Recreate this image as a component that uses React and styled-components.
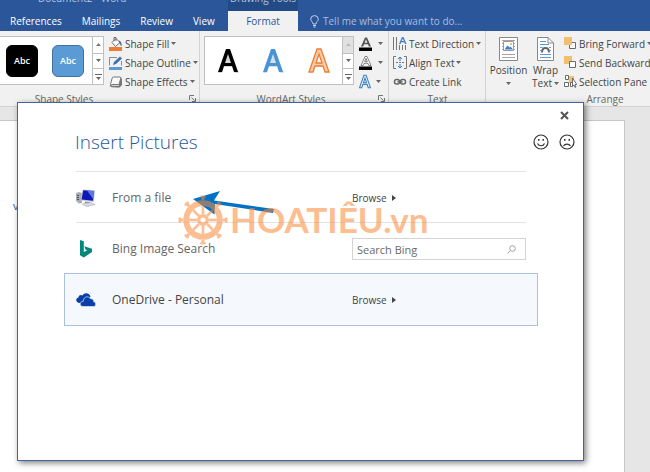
import React from 'react';
import styled, {createGlobalStyle, css} from 'styled-components';

const colors = {
    wordBlue: '#2b579a',
    darkBlue: '#224a86',
    ribbon: '#f1f1f1',
    canvas: '#e6e6e6',
    line: '#d2d2d2',
    text: '#444444',
    accent: '#5b9bd5',
    icon: '#6a6a6a',
    tan: '#f0bf70'
};

const GlobalStyle = createGlobalStyle`
    * {
        box-sizing: border-box;
    }

    body {
        margin: 0;
        background: ${colors.canvas};
        color: ${colors.text};
        font-family: "Open Sans", "Noto Sans", sans-serif;
        font-size: 10px;
    }

    button, input {
        font: inherit;
        color: inherit;
    }

    button {
        padding: 0;
        border: 0;
        background: none;
        white-space: nowrap;
    }

    svg {
        display: block;
        flex: none;
    }
`;

const Window = styled.div`
    position: relative;
    display: flex;
    flex-direction: column;
    min-height: 100vh;
    overflow: hidden;
`;

const Header = styled.header`
    display: grid;
    grid-template-columns: 228px 70px 1fr;
    grid-template-rows: 11px 20px;
    background: ${colors.wordBlue};
    color: #ffffff;
`;

const TitleText = styled.div`
    display: flex;
    align-items: flex-end;
    justify-content: ${({$center}) => $center ? 'center' : 'flex-start'};
    height: 11px;
    padding-left: ${({$center}) => $center ? 0 : 38}px;
    overflow: hidden;
    background: ${({$center}) => $center ? colors.darkBlue : 'none'};
    color: #b4c6e2;
    line-height: 16px;
    white-space: nowrap;

    span {
        margin-bottom: 5px;
    }
`;

const Tabs = styled.nav`
    grid-row: 2;
    grid-column: 1;
    display: flex;
    align-items: center;
    gap: 20px;
    padding-left: 10px;
`;

const Tab = styled.button`
    height: 20px;
    line-height: 20px;

    ${({$active}) => $active && css`
        grid-row: 2;
        grid-column: 2;
        background: ${colors.ribbon};
        color: ${colors.wordBlue};
    `}
`;

const TellMe = styled.button`
    grid-row: 2;
    grid-column: 3;
    display: flex;
    align-items: center;
    justify-self: start;
    gap: 4px;
    padding-left: 12px;
    color: #a9bddd;
`;

const Ribbon = styled.div`
    display: flex;
    height: 76px;
    border-bottom: 1px solid ${colors.line};
    background: ${colors.ribbon};
`;

const Group = styled.section`
    flex: none;
    display: flex;
    flex-direction: column;
    justify-content: space-between;
    width: ${({$width}) => $width}px;
    margin-left: ${({$pull}) => $pull ? -$pull : 0}px;
    padding: 3px 0 0 4px;
    border-right: 1px solid ${colors.line};
`;

const GroupBody = styled.div`
    display: flex;
    align-items: flex-start;
    gap: ${({$gap}) => $gap}px;
`;

const GroupFooter = styled.footer`
    display: grid;
    grid-template-columns: 1fr auto;
    align-items: center;
    height: 16px;
    padding-right: 3px;
    color: #666666;
    text-align: center;
`;

const Gallery = styled.div`
    flex: none;
    display: flex;
    justify-content: flex-end;
    width: ${({$width}) => $width}px;
    height: 49px;
    margin-top: 2px;
    border: 1px solid #c0c0c0;
    background: #ffffff;
`;

const Swatches = styled.div`
    flex: 1;
    display: flex;
    align-items: center;
    justify-content: ${({$end}) => $end ? 'flex-end' : 'space-around'};
    gap: ${({$end}) => $end ? 14 : 0}px;
    padding: ${({$end}) => $end ? '0 8px' : 0};
`;

const ShapeSwatch = styled.button`
    width: 32px;
    height: 32px;
    border: 1px solid ${({$edge}) => $edge};
    border-radius: 6px;
    background: ${({$fill}) => $fill};
    color: #ffffff;
    font-size: 9px;
    font-weight: 600;
`;

const Scroller = styled.div`
    display: grid;
    grid-template-rows: 1fr 1fr 1fr;
    width: 11px;
    border-left: 1px solid #c0c0c0;
`;

const ScrollButton = styled.button`
    display: grid;
    place-items: center;
    background: ${({$off}) => $off ? '#e1e1e1' : 'none'};

    & + & {
        border-top: 1px solid #c0c0c0;
    }
`;

const Commands = styled.div`
    display: grid;
    grid-auto-rows: 19px;
    justify-items: start;
`;

const Command = styled.button`
    display: flex;
    align-items: center;
    gap: ${({$gap = 2}) => $gap}px;
    height: 19px;
`;

const LargeCommand = styled.button`
    display: flex;
    flex-direction: column;
    align-items: center;
    width: 37px;
    padding-top: 3px;
    line-height: 13px;

    span {
        display: flex;
        align-items: center;
        gap: 2px;
        min-height: 13px;
    }

    svg + span {
        margin-top: 3px;
    }
`;

const Canvas = styled.main`
    flex: 1;
    display: flex;
    padding: 13px 25px 0 0;
`;

const Paper = styled.article`
    flex: 1;
    padding: 77px 13px;
    border: 1px solid #c6c6c6;
    border-width: 1px 1px 0 0;
    background: #ffffff;
    color: #2f5597;
    font-size: 11px;

    p {
        margin: 0;
        line-height: 16px;
    }
`;

const Dialog = styled.section`
    position: absolute;
    top: 102px;
    left: 17px;
    right: 66px;
    height: 359px;
    border: 1px solid #41659f;
    background: #ffffff;
    box-shadow: 2px 2px 6px rgba(0, 0, 0, .5);
`;

const DialogBar = styled.div`
    display: flex;
    align-items: flex-start;
    justify-content: flex-end;
    height: 24px;
    padding: 8px 14px 0 0;
`;

const DialogHeader = styled.header`
    display: flex;
    align-items: center;
    justify-content: space-between;
    height: 30px;
    padding: 0 8px 0 57px;

    h1 {
        margin: 0;
        color: ${colors.wordBlue};
        font-size: 19px;
        font-weight: 300;
        line-height: 30px;
    }

    div {
        display: flex;
        gap: 10px;
    }
`;

const Sources = styled.div`
    margin: 14px 45px 0 46px;
`;

const Source = styled.div`
    display: grid;
    grid-template-columns: 36px 1fr 174px;
    align-items: center;
    height: 51px;
    margin: 0 12px;
    padding-top: 2px;
    border-top: 1px solid #e3e3e3;
    color: #666666;

    ${({$selected}) => $selected && css`
        height: 53px;
        margin: 0;
        padding: 0 11px;
        border: 1px solid #a9c0de;
        background: #f5f9fe;
        color: ${colors.text};
    `}
`;

const SourceName = styled.label`
    font-size: 12px;
    line-height: 16px;
`;

const Browse = styled.button`
    display: flex;
    align-items: center;
    justify-self: start;
    gap: 5px;
    color: #444444;
    font-weight: 500;
`;

const SearchBox = styled.div`
    display: flex;
    align-items: center;
    height: 22px;
    padding: 0 9px 0 4px;
    border: 1px solid #d4d4d4;
    background: #ffffff;

    input {
        flex: 1;
        min-width: 0;
        padding: 0;
        border: 0;
        outline: 0;
        background: none;
        font-size: 11px;
    }

    input::placeholder {
        color: #6a6a6a;
        opacity: 1;
    }
`;

const Arrow = styled.svg`
    position: absolute;
    top: 87px;
    left: 174px;
`;

const Watermark = styled.div`
    position: absolute;
    top: 92px;
    left: 160px;
    display: flex;
    align-items: flex-start;
    gap: 2px;
    color: rgb(251, 137, 55);
    opacity: .55;
    pointer-events: none;
    font-family: Lato, sans-serif;
    font-size: 35px;
    font-weight: 700;
    line-height: 48px;
`;

const Caret = ({up, fill = '#666666'}) => (
    <svg width="5" height="3" viewBox="0 0 5 3">
        <path d={up ? 'M0 3 2.5 0 5 3z' : 'M0 0h5L2.5 3z'} fill={fill}/>
    </svg>
);

const Launcher = () => (
    <button aria-label="More options">
        <svg width="7" height="7" fill="none" stroke="#777777">
            <path d="M.5 5V.5H5M2.5 2.5l3 3M6.5 3v3.5H3"/>
        </svg>
    </button>
);

const GalleryScroller = ({topDisabled}) => (
    <Scroller>
        <ScrollButton aria-label="Previous row" $off={topDisabled}>
            <Caret up fill={topDisabled ? '#bbbbbb' : '#777777'}/>
        </ScrollButton>
        <ScrollButton aria-label="Next row"><Caret/></ScrollButton>
        <ScrollButton aria-label="More styles">
            <svg width="7" height="6"><path d="M0 0h7v1H0zM1 3h5L3.5 6z" fill="#666666"/></svg>
        </ScrollButton>
    </Scroller>
);

const FillIcon = () => (
    <svg width="14" height="14">
        <path d="M3 5.5 7 1.5 11 5.5 6.5 9.5z" fill="#ffffff" stroke={colors.icon}/>
        <path d="M5 4V.5h2V4" fill="none" stroke={colors.icon}/>
        <path d="M10 3.5c2 .5 3 2.5 2.5 6-1-1-1.5-2.5-2.5-4z" fill="#3f6fae"/>
        <path d="M0 10h13v4H0z" fill="#ed7d31"/>
    </svg>
);

const OutlineIcon = () => (
    <svg width="14" height="14">
        <path d="M8 1.5H.5v8M12.5 5v4.5" fill="none" stroke="#8a8a8a"/>
        <path d="m4 9 1-3 6-5.5 2 2L7 8z" fill="#3f6fae"/>
        <path d="M0 11h13v3H0z" fill={colors.accent}/>
    </svg>
);

const EffectsIcon = () => (
    <svg width="14" height="14">
        <path d="M3 12.5h7.5L13 10V3.5L9.5 12z" fill="#777777"/>
        <path d="M4.500 2h6.500q1 0 .8 1l-1.500 5.500q-.3 1-1.300 1H2.500q-1 0-.8-1L3.200 3q.3-1 1.300-1z" fill="#fafafa" stroke="#777777"/>
        <path d="M1.500 9.500q0 2 1.500 2h6q1 0 1.500-1L12.500 3.500" fill="none" stroke="#777777" strokeWidth="1.5"/>
    </svg>
);

// one drawing for gallery samples and the small text fill / outline / effects icons
const LetterA = ({size = 22, fill, stroke = 'none', shadow, bar}) => (
    <svg width={size} height={bar ? 14 : size + 3} viewBox={bar ? '0 0 14 14' : '0 0 22 25'}>
        {shadow && <path d="M1 25 9 3h4.5L22 25h-4l-2-6H7l-2 6z" fill={shadow} opacity=".35"/>}
        {bar
            ? <g>
                <path d="M2 9.5 6 .5h2l4 9H9.800L9 7.300H5L4.200 9.500zM5.700 5.700h2.600L7 2.300z" fill={fill} stroke={stroke} strokeWidth=".7"/>
                <path d="M0 10.500h13V14H0z" fill="#000000"/>
            </g>
            : <path
                d="M1 24 9 1h4l8 23h-4l-2-6H7l-2 6zM8 15h6l-3-9z"
                fill={fill}
                stroke={stroke}
                strokeWidth={size < 20 ? 2 : 1.3}
                fillRule="evenodd"
            />}
    </svg>
);

const DirectionIcon = () => (
    <svg width="14" height="13">
        <path d="M.5 0v13M3.5 0v13M6.5 8v5M9.5 8v5M12.5 8v5" stroke="#777777"/>
        <path d="M6 7 9 0h1.500L13.500 7H12l-.7-1.800H8.200L7.500 7zM8.700 4h2.200L9.800 1.500z" fill="#3b7fc4"/>
    </svg>
);

const AlignIcon = () => (
    <svg width="14" height="13" fill="none" stroke="#777777">
        <path d="M3 .5H.5v12H3M11 .5h2.500v12H11"/>
        <path d="M3 6.500h8" strokeDasharray="2 1"/>
        <path d="M7 1v4M5 3l2-2 2 2M7 12V8M5 10l2 2 2-2" stroke="#3b7fc4"/>
    </svg>
);

const LinkIcon = () => (
    <svg width="14" height="8" fill="none" stroke="#666666" strokeWidth="1.5">
        <rect x="1.5" y="1.5" width="5" height="4.5" rx="2"/>
        <rect x="7.5" y="1.5" width="5" height="4.5" rx="2"/>
        <path d="M4.500 3.800h5"/>
    </svg>
);

const PositionIcon = () => (
    <svg width="19" height="24">
        <path d="M.5.5h18v23H.5z" fill="#ffffff" stroke="#888888"/>
        <path d="M3 3.500h13M3 17.500h13M3 20.500h13M3 6.500h2M3 9.500h2M3 12.500h2M14 6.500h2M14 9.500h2M14 12.500h2" stroke="#a5a5a5"/>
        <path d="M4.500 4.500h10v9h-10z" fill="#ffffff" stroke="#999999"/>
        <path d="m5.500 12.500 3-4 2 2 1-1 2.500 3z" fill="#3b7fc4"/>
        <path d="M11 6h2v2h-2z" fill={colors.tan}/>
    </svg>
);

const WrapIcon = () => (
    <svg width="17" height="24">
        <path d="M.5.5H11L16.500 6v17.500H.5z" fill="#ffffff" stroke="#888888"/>
        <path d="M11 .5V6h5.500" fill="none" stroke="#888888"/>
        <path d="M3 4.500h6M3 7.500h9M3 10.500h2.500M12 10.500h2M3 13.500h1M13 13.500h1M3 17.500h11M3 20.500h11" stroke={colors.accent}/>
        <path d="M5 15.500c0-6 7-6 7 0" fill="none" stroke="#666666" strokeWidth="2"/>
    </svg>
);

const ForwardIcon = () => (
    <svg width="13" height="13">
        <path d="M5.500 5.500h6v6h-6z" fill="#ffffff" stroke={colors.icon}/>
        <path d="M0 0h8v8H0z" fill={colors.tan}/>
    </svg>
);

const BackwardIcon = () => (
    <svg width="13" height="13">
        <path d="M0 0h8v8H0z" fill={colors.tan}/>
        <path d="M5.500 5.500h6v6h-6z" fill="#ffffff" stroke={colors.icon}/>
    </svg>
);

const SelectionIcon = () => (
    <svg width="13" height="13">
        <path d="M5 1h5v7H5z" fill={colors.tan}/>
        <path d="M1.500.5h3v4h-3zM.5 7.500h4v4h-4zM6.500 7.500h2v4h-2z" fill="#ffffff" stroke={colors.icon}/>
        <path d="M8.500 3v8l1.500-1 1 2.500 1-.5-1-2.500h1.800z" fill="#ffffff" stroke="#555555" strokeWidth=".8"/>
    </svg>
);

const BulbIcon = () => (
    <svg width="9" height="13" fill="none" stroke="#c3d1e8">
        <path d="M3 9C3 7 .7 6.300.7 4.200a3.800 3.600 0 0 1 7.600 0C8.300 6.300 6 7 6 9zM3 10.500h3M3.500 12h2"/>
    </svg>
);

const Face = ({sad}) => (
    <button aria-label={sad ? 'Send a frown' : 'Send a smile'}>
        <svg width="16" height="16" fill="none" stroke="#333333" strokeWidth="1.2">
            <circle cx="8" cy="8" r="7"/>
            <path d={sad ? 'M4.500 12c1.500-2.500 5.500-2.500 7 0' : 'M4.500 9.500c1.500 3 5.500 3 7 0'}/>
            <path d="M5 5h1.500v1.800H5zM9.500 5H11v1.800H9.500z" fill="#333333" stroke="none"/>
        </svg>
    </button>
);

const ComputerIcon = () => (
    <svg width="20" height="18">
        <path d="M0 4 3 3l3 1v10l-3 .5L0 12z" fill="#a9adb2"/>
        <path d="M1 6.500h2M1 8.500h2M1 10.500h2" stroke="#4c5055"/>
        <path d="M6.500.5 19 1.200 18 13 4.500 11.500z" fill="#c6cede"/>
        <path d="M7.300 1.300 17.800 2 17 11.800 5.500 10.500z" fill="#1018b4"/>
        <path d="m11 1.600 6.800.4-.7 8z" fill="#5b78e4"/>
        <path d="m9 12.500 5 .5.500 2-6-.7z" fill="#8f959d"/>
        <path d="m6 15 9-1.500 4 2-8 2.200z" fill="#d6d9dd" stroke="#b1b5ba" strokeWidth=".6"/>
    </svg>
);

const BingIcon = () => (
    <svg width="20" height="18">
        <path d="M4 0 7.800 1.300V12L11.300 10.300 9.500 9.400 8.300 6.200 16 8.800V12L7.800 17.500 4 15.300z" fill="#00897b"/>
    </svg>
);

const OneDriveIcon = () => (
    <svg width="20" height="14">
        <path d="M4 10C-.8 10-.8 5 2.600 4.400 2.500 2.300 5 1.300 6.500 2.500 8-.5 13-.7 14.500 3.600L10 8z" fill="#0b3fa8"/>
        <path d="M7 13.500c-3.800 0-3.800-5 .3-5.300 0-4.900 5.700-5.600 7.200-2.400 2.600-.3 3.400 1.500 3.200 3 2.700.3 2.500 4.700-.2 4.700z" fill="#0b3fa8" stroke="#dfe9f8" strokeWidth=".7"/>
    </svg>
);

const PlayIcon = () => <svg width="4" height="6"><path d="M0 0v6l4-3z" fill="#444444"/></svg>;

const Wheel = () => (
    <svg width="50" height="50" viewBox="-25 -25 50 50" fill="none" stroke="currentColor">
        <circle r="16.800" strokeWidth="5.800"/>
        <circle r="4.300" strokeWidth="3.400"/>
        {[0, 45, 90, 135, 180, 225, 270, 315].map(angle => (
            <g key={angle} transform={`rotate(${angle})`}>
                <path d="M0-6v-7.900" strokeWidth="2.600"/>
                <path d="M0-19.700v-3.800" strokeWidth="3"/>
                <path d="M-1.500-23.200h3" strokeWidth="2.500" strokeLinecap="round"/>
            </g>
        ))}
    </svg>
);

const RibbonGroup = ({title, width, pull, gap = 5, launcher, children}) => (
    <Group $width={width} $pull={pull}>
        <GroupBody $gap={gap}>{children}</GroupBody>
        <GroupFooter>
            <span>{title}</span>
            {launcher && <Launcher/>}
        </GroupFooter>
    </Group>
);

const WordHeader = () => (
    <Header>
        <TitleText><span>Document2 - Word</span></TitleText>
        <TitleText $center><span>Drawing Tools</span></TitleText>
        <Tabs>
            <Tab>References</Tab>
            <Tab>Mailings</Tab>
            <Tab>Review</Tab>
            <Tab>View</Tab>
        </Tabs>
        <Tab $active>Format</Tab>
        <TellMe><BulbIcon/>Tell me what you want to do...</TellMe>
    </Header>
);

const FormatRibbon = () => (
    <Ribbon>
        <RibbonGroup title="Shape Styles" width={265} pull={65} launcher>
            <Gallery $width={165}>
                <Swatches $end>
                    <ShapeSwatch $fill="#000000" $edge="#000000">Abc</ShapeSwatch>
                    <ShapeSwatch $fill={colors.accent} $edge="#41719c">Abc</ShapeSwatch>
                </Swatches>
                <GalleryScroller/>
            </Gallery>
            <Commands>
                <Command><FillIcon/>Shape Fill<Caret/></Command>
                <Command><OutlineIcon/>Shape Outline<Caret/></Command>
                <Command><EffectsIcon/>Shape Effects<Caret/></Command>
            </Commands>
        </RibbonGroup>
        <RibbonGroup title="WordArt Styles" width={189} launcher>
            <Gallery $width={150}>
                <Swatches>
                    <LetterA fill="#000000" shadow="#888888"/>
                    <LetterA fill="#4a94d6" shadow="#7fa8cf"/>
                    <LetterA fill="#f8cbad" stroke="#ed7d31"/>
                </Swatches>
                <GalleryScroller topDisabled/>
            </Gallery>
            <Commands>
                <Command $gap={5} aria-label="Text fill"><LetterA size={14} bar fill="#555555"/><Caret/></Command>
                <Command $gap={5} aria-label="Text outline"><LetterA size={14} bar fill="#ffffff" stroke="#555555"/><Caret/></Command>
                <Command $gap={5} aria-label="Text effects"><LetterA size={12} fill="#ffffff" stroke="#3b7fc4"/><Caret/></Command>
            </Commands>
        </RibbonGroup>
        <RibbonGroup title="Text" width={97}>
            <Commands>
                <Command><DirectionIcon/>Text Direction<Caret/></Command>
                <Command><AlignIcon/>Align Text<Caret/></Command>
                <Command><LinkIcon/>Create Link</Command>
            </Commands>
        </RibbonGroup>
        <RibbonGroup title="Arrange" width={238} gap={0}>
            <LargeCommand>
                <PositionIcon/>
                <span>Position</span>
                <span><Caret/></span>
            </LargeCommand>
            <LargeCommand>
                <WrapIcon/>
                <span>Wrap</span>
                <span>Text<Caret/></span>
            </LargeCommand>
            <Commands>
                <Command><ForwardIcon/>Bring Forward<Caret/></Command>
                <Command><BackwardIcon/>Send Backward</Command>
                <Command><SelectionIcon/>Selection Pane</Command>
            </Commands>
        </RibbonGroup>
    </Ribbon>
);

const InsertPictures = () => (
    <Dialog role="dialog" aria-labelledby="dialog-title">
        <DialogBar>
            <button aria-label="Close">
                <svg width="9" height="9"><path d="m1 1 7 7M8 1 1 8" stroke="#555555" strokeWidth="2"/></svg>
            </button>
        </DialogBar>
        <DialogHeader>
            <h1 id="dialog-title">Insert Pictures</h1>
            <div>
                <Face/>
                <Face sad/>
            </div>
        </DialogHeader>
        <Sources>
            <Source>
                <ComputerIcon/>
                <SourceName htmlFor="browse-file">From a file</SourceName>
                <Browse id="browse-file">Browse<PlayIcon/></Browse>
            </Source>
            <Source>
                <BingIcon/>
                <SourceName htmlFor="bing">Bing Image Search</SourceName>
                <SearchBox>
                    <input id="bing" type="text" placeholder="Search Bing"/>
                    <svg width="9" height="9" fill="none" stroke="#a0a0a0">
                        <circle cx="5.5" cy="3.5" r="2.8"/>
                        <path d="M3.500 5.500.5 8.500"/>
                    </svg>
                </SearchBox>
            </Source>
            <Source $selected>
                <OneDriveIcon/>
                <SourceName htmlFor="browse-onedrive">OneDrive - Personal</SourceName>
                <Browse id="browse-onedrive">Browse<PlayIcon/></Browse>
            </Source>
        </Sources>
        <Arrow width="84" height="28">
            <path d="M1 9 28 1 22 10.500 82 19l-1 4-58-9-.5 10.500z" fill="#0072c6"/>
        </Arrow>
        <Watermark>
            <Wheel/>
            <span>HOATIÊU.vn</span>
        </Watermark>
    </Dialog>
);

const App = () => (
    <Window>
        <GlobalStyle/>
        <WordHeader/>
        <FormatRibbon/>
        <Canvas>
            <Paper><p>v</p></Paper>
        </Canvas>
        <InsertPictures/>
    </Window>
);

export default App;
